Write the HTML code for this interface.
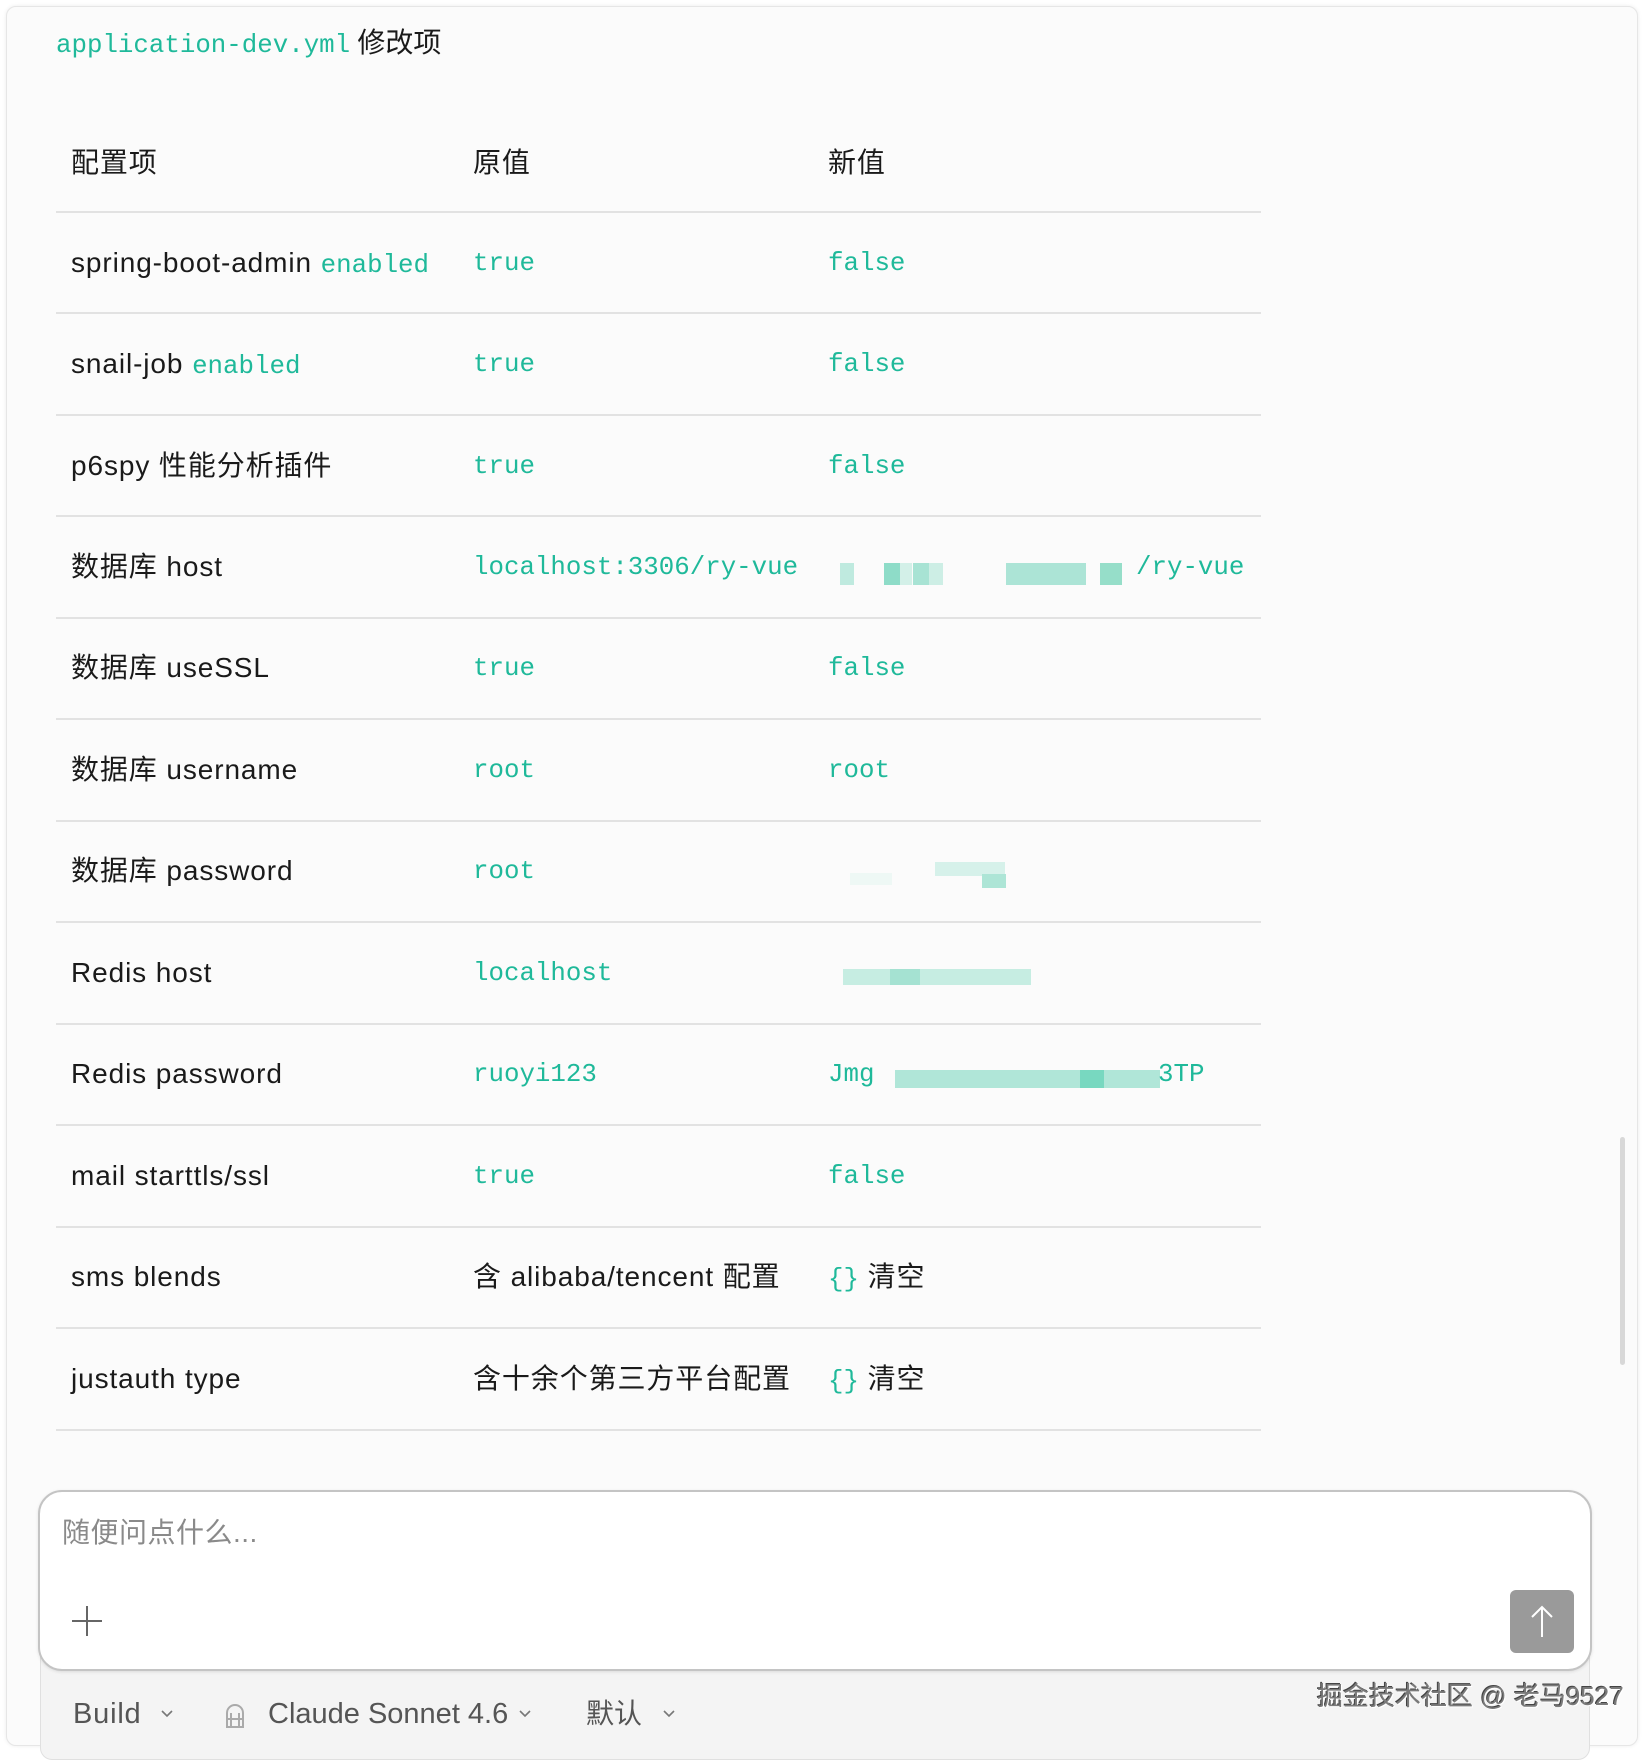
<!DOCTYPE html>
<html><head><meta charset="utf-8"><style>
*{margin:0;padding:0;box-sizing:border-box}
body{width:1650px;height:1752px;background:#fff;position:relative;overflow:hidden;font-family:"Liberation Sans","Noto Sans CJK SC",sans-serif;color:#1a1a1a}
.card{position:absolute;left:6px;top:6px;width:1632px;height:1740px;background:#fbfbfb;border:1px solid #e6e6e6;border-radius:10px;box-shadow:0 0 4px rgba(0,0,0,.08)}
.a{position:absolute;white-space:nowrap}
.m{font-family:"Liberation Mono",monospace;color:#1fb99a;letter-spacing:0}
.t{font-size:28px;line-height:32px;letter-spacing:0.9px}
.mono{font-size:25.8px;line-height:32px}
.line{position:absolute;left:56px;width:1205px;height:2px;background:#e2e2e2}
.blk{position:absolute;height:22px}
</style></head><body>
<div class="card"></div>
<div class="a" style="left:56px;top:27px;font-size:25.8px;line-height:32px"><span class="m">application-dev.yml</span> <span style="font-size:28px">修改项</span></div>

<div class="a t" style="left:71px;top:147px">配置项</div>
<div class="a t" style="left:473px;top:147px">原值</div>
<div class="a t" style="left:828px;top:147px">新值</div>

<div class="line" style="top:211px"></div>
<div class="line" style="top:312px"></div>
<div class="line" style="top:414px"></div>
<div class="line" style="top:515px"></div>
<div class="line" style="top:617px"></div>
<div class="line" style="top:718px"></div>
<div class="line" style="top:820px"></div>
<div class="line" style="top:921px"></div>
<div class="line" style="top:1023px"></div>
<div class="line" style="top:1124px"></div>
<div class="line" style="top:1226px"></div>
<div class="line" style="top:1327px"></div>
<div class="line" style="top:1429px"></div>

<div class="a t" style="left:71px;top:247px">spring-boot-admin <span class="m mono">enabled</span></div>
<div class="a m mono" style="left:473px;top:248px">true</div>
<div class="a m mono" style="left:828px;top:248px">false</div>

<div class="a t" style="left:71px;top:348px">snail-job <span class="m mono">enabled</span></div>
<div class="a m mono" style="left:473px;top:349px">true</div>
<div class="a m mono" style="left:828px;top:349px">false</div>

<div class="a t" style="left:71px;top:450px">p6spy 性能分析插件</div>
<div class="a m mono" style="left:473px;top:451px">true</div>
<div class="a m mono" style="left:828px;top:451px">false</div>

<div class="a t" style="left:71px;top:551px">数据库 host</div>
<div class="a m mono" style="left:473px;top:552px">localhost:3306/ry-vue</div>
<div class="blk" style="left:840px;top:563px;width:14px;background:#bfeadf"></div>
<div class="blk" style="left:884px;top:563px;width:16px;background:#8edcc8"></div>
<div class="blk" style="left:900px;top:563px;width:12px;background:#d3f0e8"></div>
<div class="blk" style="left:913px;top:563px;width:16px;background:#a8e3d4"></div>
<div class="blk" style="left:929px;top:563px;width:14px;background:#cdeee5"></div>
<div class="blk" style="left:1006px;top:563px;width:80px;background:#ace4d6"></div>
<div class="blk" style="left:1100px;top:563px;width:22px;background:#96dec9"></div>
<div class="a m mono" style="left:1136px;top:552px">/ry-vue</div>

<div class="a t" style="left:71px;top:652px">数据库 useSSL</div>
<div class="a m mono" style="left:473px;top:653px">true</div>
<div class="a m mono" style="left:828px;top:653px">false</div>

<div class="a t" style="left:71px;top:754px">数据库 username</div>
<div class="a m mono" style="left:473px;top:755px">root</div>
<div class="a m mono" style="left:828px;top:755px">root</div>

<div class="a t" style="left:71px;top:855px">数据库 password</div>
<div class="a m mono" style="left:473px;top:856px">root</div>
<div class="blk" style="left:850px;top:873px;width:42px;height:12px;background:#eef8f5"></div>
<div class="blk" style="left:935px;top:862px;width:70px;height:14px;background:#d6f1ea"></div>
<div class="blk" style="left:982px;top:874px;width:24px;height:14px;background:#ade5d6"></div>

<div class="a t" style="left:71px;top:957px">Redis host</div>
<div class="a m mono" style="left:473px;top:958px">localhost</div>
<div class="blk" style="left:843px;top:969px;width:188px;height:16px;background:#c6ede2"></div>
<div class="blk" style="left:890px;top:969px;width:30px;height:16px;background:#a5e2d2"></div>

<div class="a t" style="left:71px;top:1058px">Redis password</div>
<div class="a m mono" style="left:473px;top:1059px">ruoyi123</div>
<div class="a m mono" style="left:828px;top:1059px">Jmg</div>
<div class="blk" style="left:895px;top:1070px;width:265px;height:18px;background:#b0e6d8"></div>
<div class="blk" style="left:1080px;top:1070px;width:24px;height:18px;background:#78d8c0"></div>
<div class="a m mono" style="left:1158px;top:1059px">3TP</div>

<div class="a t" style="left:71px;top:1160px">mail starttls/ssl</div>
<div class="a m mono" style="left:473px;top:1161px">true</div>
<div class="a m mono" style="left:828px;top:1161px">false</div>

<div class="a t" style="left:71px;top:1261px">sms blends</div>
<div class="a t" style="left:473px;top:1261px">含 alibaba/tencent 配置</div>
<div class="a t" style="left:828px;top:1261px"><span class="m mono">{}</span> 清空</div>

<div class="a t" style="left:71px;top:1363px">justauth type</div>
<div class="a t" style="left:473px;top:1363px">含十余个第三方平台配置</div>
<div class="a t" style="left:828px;top:1363px"><span class="m mono">{}</span> 清空</div>

<div class="a" style="left:1620px;top:1137px;width:5px;height:228px;background:#d8d8d8;border-radius:3px"></div>

<div class="a" style="left:40px;top:1560px;width:1550px;height:200px;background:#f4f4f4;border:1px solid #e0e0e0;border-radius:0 0 12px 12px"></div>
<div class="a" style="left:38px;top:1490px;width:1554px;height:181px;background:#fff;border:2px solid #c4c4c4;border-radius:24px;box-shadow:0 1px 3px rgba(0,0,0,.1)"></div>
<div class="a" style="left:62px;top:1516px;font-size:28px;line-height:34px;color:#8a8a8a;letter-spacing:0.5px">随便问点什么...</div>
<svg class="a" style="left:71px;top:1605px" width="32" height="32" viewBox="0 0 32 32"><path d="M16 1V31M1 16H31" stroke="#666" stroke-width="2" fill="none"/></svg>
<div class="a" style="left:1510px;top:1590px;width:64px;height:63px;background:#9a9a9a;border-radius:6px"></div>
<svg class="a" style="left:1526px;top:1603px" width="32" height="36" viewBox="0 0 32 36"><path d="M16 34V4M6 14L16 4L26 14" stroke="#fff" stroke-width="2" fill="none"/></svg>

<div class="a" style="left:73px;top:1697px;font-size:29px;line-height:34px;color:#555;letter-spacing:0.8px">Build</div>
<svg class="a" style="left:160px;top:1709px" width="14" height="10" viewBox="0 0 14 10"><path d="M2 2L7 7L12 2" stroke="#777" stroke-width="1.6" fill="none"/></svg>
<svg class="a" style="left:222px;top:1701px" width="26" height="28" viewBox="0 0 26 28"><path d="M5 26V12a8 8 0 0 1 16 0V26ZM9 12v14M17 12v14M5 18h16" stroke="#aaa" stroke-width="2" fill="none"/></svg>
<div class="a" style="left:268px;top:1697px;font-size:29px;line-height:34px;color:#555">Claude Sonnet 4.6</div>
<svg class="a" style="left:518px;top:1709px" width="14" height="10" viewBox="0 0 14 10"><path d="M2 2L7 7L12 2" stroke="#777" stroke-width="1.6" fill="none"/></svg>
<div class="a" style="left:586px;top:1697px;font-size:28px;line-height:34px;color:#555">默认</div>
<svg class="a" style="left:662px;top:1709px" width="14" height="10" viewBox="0 0 14 10"><path d="M2 2L7 7L12 2" stroke="#777" stroke-width="1.6" fill="none"/></svg>

<div class="a" style="left:1317px;top:1679px;font-size:26px;line-height:34px;color:#7a7a7a;text-shadow:1px 1px 0 #fff,-1px -1px 0 #444">掘金技术社区 @ 老马9527</div>
</body></html>
